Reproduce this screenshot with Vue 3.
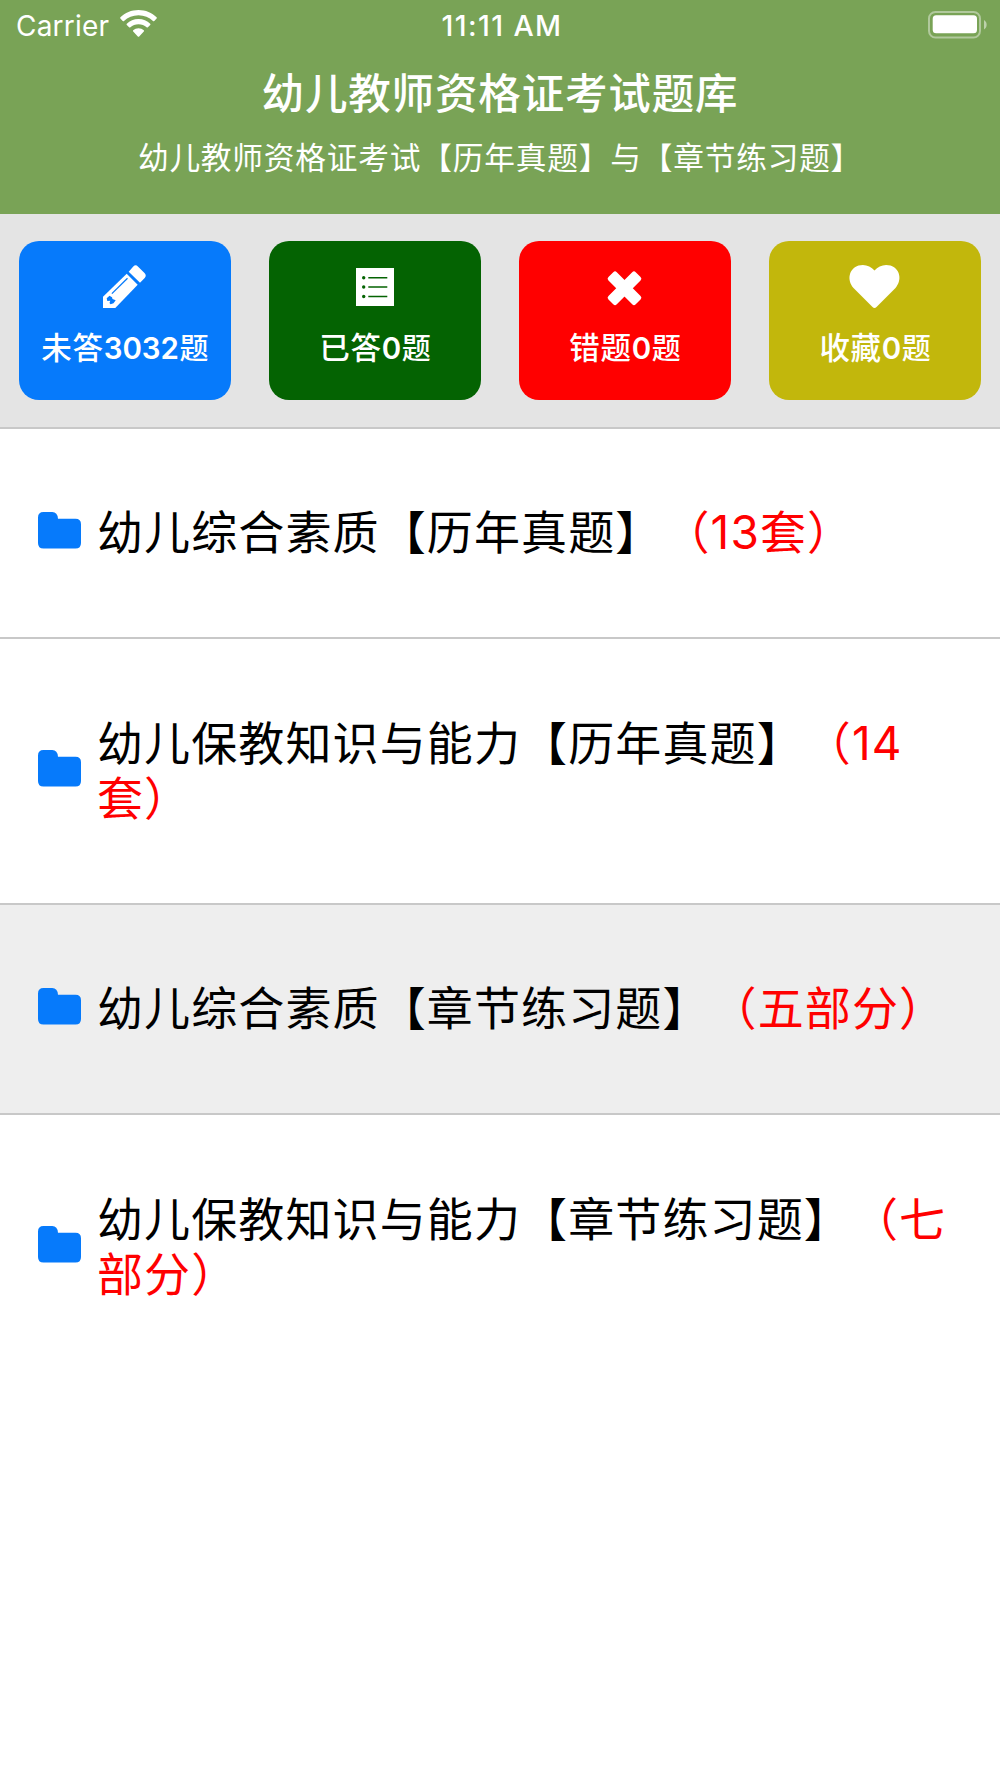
<script setup>
const stats = [
  { id: 'todo', name: '未答', count: 3032 },
  { id: 'done', name: '已答', count: 0 },
  { id: 'wrong', name: '错题', count: 0 },
  { id: 'fav', name: '收藏', count: 0 },
]
const rows = [
  { title: '幼儿综合素质【历年真题】', count: '（13套）' },
  { title: '幼儿保教知识与能力【历年真题】', count: '（14套）', tall: true },
  { title: '幼儿综合素质【章节练习题】', count: '（五部分）', active: true },
  { title: '幼儿保教知识与能力【章节练习题】', count: '（七部分）', tall: true },
]
</script>

<template>
  <main class="screen">
    <header class="header">
      <div class="status">
        <div class="carrier">
          <span>Carrier</span>
          <svg class="wifi" viewBox="0 0 37 27">
            <path d="M18.500 0C11.400 0 5 2.800.4 7.300c-.4.4-.4.9 0 1.300l2.300 2.300c.4.4.9.4 1.300 0C7.800 7.300 12.900 5.200 18.500 5.200s10.700 2.100 14.500 5.700c.4.4.9.4 1.300 0l2.300-2.300c.4-.4.4-.9 0-1.300C32 2.800 25.600 0 18.500 0z" />
            <path d="M18.500 9C13.900 9 9.800 10.800 6.800 13.700c-.4.4-.4.9 0 1.300l2.300 2.300c.4.4.9.4 1.300 0 2.100-1.900 5-3.100 8.100-3.100s6 1.200 8.100 3.100c.4.4.9.4 1.300 0l2.300-2.300c.4-.4.4-.9 0-1.300C27.200 10.800 23.100 9 18.500 9z" />
            <path d="M18.500 18.200c-2 0-3.900.8-5.300 2-.4.4-.4.900 0 1.300l4.600 4.900c.4.4 1 .4 1.400 0l4.600-4.900c.4-.4.4-.9 0-1.300-1.400-1.200-3.300-2-5.300-2z" />
          </svg>
        </div>
        <span class="time">11:11 AM</span>
        <svg class="battery" viewBox="0 0 60 28">
          <rect x="1" y="1" width="51" height="25.500" rx="6.500" fill="none" stroke="#fff" stroke-opacity=".42" stroke-width="2" />
          <rect x="4.700" y="4.300" width="44.300" height="18" rx="3.500" fill="#fff" />
          <path d="M56 9v9.500c3.500-2 3.500-7.500 0-9.500z" fill="#fff" fill-opacity=".5" />
        </svg>
      </div>
      <h1>幼儿教师资格证考试题库</h1>
      <p>幼儿教师资格证考试【历年真题】与【章节练习题】</p>
    </header>

    <section class="stats">
      <button v-for="s in stats" :key="s.id" class="card" :class="s.id">
        <svg class="icon" viewBox="0 0 60 50">
          <template v-if="s.id === 'todo'">
            <path d="M33.700 11.700 38.300 6.600q2.200-2.400 4.600-.2l6.600 6.600q2.400 2.400.2 4.900L45 22.700z" />
            <path d="M8 48V36.700L31.700 13.700 42.700 24.700 20.300 48z" />
            <path class="cut" d="M11.700 38.300 14.500 35.700 17 37.300 17.500 39 20.700 40.300 18.500 43.300 15.500 44.200 14.500 43 15.300 40.800 12.300 41z" />
            <path class="slit" d="M16.900 33.600 32.500 18.300" />
          </template>
          <template v-else-if="s.id === 'done'">
            <path d="M11 8h38v38H11z" />
            <g class="cut">
              <circle cx="18.700" cy="17.700" r="1.700" /><circle cx="18.700" cy="27" r="1.700" /><circle cx="18.700" cy="36.500" r="1.700" />
              <path d="M23.300 17h19v1.500h-19zM23.300 26.300h19v1.500h-19zM23.300 35.700h19v1.500h-19z" />
            </g>
          </template>
          <g v-else-if="s.id === 'wrong'" transform="rotate(45 29.500 28.200)">
            <rect x="10.200" y="22.300" width="38.600" height="11.800" rx="2.500" />
            <rect x="23.600" y="8.900" width="11.800" height="38.600" rx="2.500" />
          </g>
          <path v-else d="M29.500 48q-1 0-2-1L8.500 28C1.500 20 4 8.500 13.500 5.500 20 3.700 25.500 6 29.500 10.500 33.500 6 39 3.700 45.500 5.500 55 8.500 57.500 20 50.500 28l-19 19q-1 1-2 1z" />
        </svg>
        <span class="label"><span class="name">{{ s.name }}</span><span class="num">{{ s.count }}</span><span class="unit">题</span></span>
      </button>
    </section>

    <ul class="list">
      <li v-for="r in rows" :key="r.title" :class="{ tall: r.tall, active: r.active }">
        <svg class="folder" viewBox="0 0 43 37">
          <path d="M5.500 0h8.700q5.300 0 5.800 6.700h17.500q5.500 0 5.500 5.500v18.800q0 5.500-5.500 5.500h-32q-5.500 0-5.500-5.500V5.500Q0 0 5.500 0z" />
        </svg>
        <div class="text">{{ r.title }}<span class="red">{{ r.count }}</span></div>
      </li>
    </ul>
  </main>
</template>

<style>
body { background: #fff; }
</style>

<style scoped>
.screen {
  width: 1000px;
  height: 1778px;
  overflow: hidden;
  background: #fff;
  font-family: Inter, "Noto Sans CJK SC", sans-serif;
  text-spacing-trim: space-all;
}
.header {
  box-sizing: border-box;
  height: 214px;
  background: #79a356;
  color: #fff;
  text-align: center;
}
.status {
  display: grid;
  grid-template-columns: 1fr auto 1fr;
  align-items: center;
  height: 50px;
  padding: 0 12px 0 16px;
}
.carrier { display: flex; align-items: center; gap: 11px; font-size: 28px; font-weight: 400; letter-spacing: 0.200px; line-height: 50px; }
.carrier span { padding-top: 1px; }
.wifi { width: 37px; height: 27px; fill: #fff; margin-top: -4px; }
.time { padding-top: 1px; font-size: 28.500px; font-weight: 500; letter-spacing: 1.400px; line-height: 50px; }
.battery { width: 60px; height: 28px; justify-self: end; margin-top: -2px; }
h1 { margin: 15px 0 0; font-size: 42.500px; line-height: 58px; font-weight: 500; letter-spacing: 0.850px; }
p { margin: 14px 0 0; font-size: 30.700px; line-height: 42px; letter-spacing: 0.800px; }
.stats {
  box-sizing: border-box;
  height: 215px;
  padding: 27px 18.700px 0;
  display: grid;
  grid-template-columns: repeat(4, 212.400px);
  justify-content: space-between;
  background: #e4e4e4;
  border-bottom: 2px solid #c8c8c8;
}
.card {
  display: flex;
  flex-direction: column;
  align-items: center;
  justify-content: flex-start;
  height: 159px;
  padding: 19px 0 0;
  border: 0;
  border-radius: 20px;
  color: #fff;
  font-family: inherit;
}
.todo { background: #067afb; }
.done { background: #046302; }
.wrong { background: #f00; }
.fav { background: #c2b70c; }
.icon { width: 60px; height: 50px; fill: #fff; }
.done .cut { fill: #046302; }
.todo .cut { fill: #067afb; }
.slit { stroke: #067afb; stroke-width: 1.300; }
.label { margin-top: 16px; font-size: 30.500px; line-height: 44px; font-weight: 500; letter-spacing: 0.700px; white-space: nowrap; }
.num { font-size: 29.500px; font-weight: 600; letter-spacing: 0; margin-right: 0.500px; }
.unit { font-size: 29px; letter-spacing: 0; }
.list { list-style: none; margin: 0; padding: 0; }
li {
  box-sizing: border-box;
  display: flex;
  align-items: center;
  height: 210px;
  padding: 0 38px 1px;
  border-bottom: 2px solid #c8c8c8;
}
li.tall { height: 266px; }
li.active { background: #eee; }
li:last-child { border-color: transparent; }
.folder { flex: none; width: 43px; height: 37px; fill: #067afb; margin-top: -5px; }
.text { margin-left: 16px; font-size: 46px; line-height: 54.700px; letter-spacing: 1.120px; color: #000; }
.red { color: #f00; margin-left: 1px; }
</style>
